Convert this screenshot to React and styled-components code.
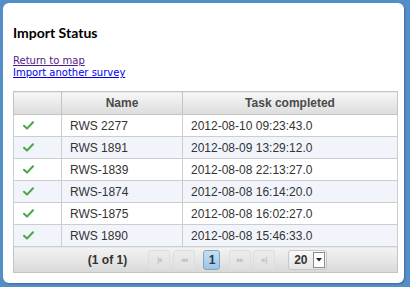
import styled, { createGlobalStyle } from 'styled-components'

const Global = createGlobalStyle`
  html, body {
    margin: 0;
    padding: 0;
    background: #548ec9;
  }
  body {
    width: 410px;
    height: 287px;
    overflow: hidden;
  }
`

const Panel = styled.div`
  box-sizing: border-box;
  margin: 3px 6px 0 3px;
  width: 401px;
  height: 280px;
  background: #fff;
  border-radius: 6px;
  box-shadow: 1px 1px 2px rgba(0, 0, 0, 0.25);
  padding: 21px 10px 0 10px;
`

const Title = styled.h2`
  margin: 0;
  font-family: Lato, "Liberation Sans", sans-serif;
  font-weight: bold;
  font-size: 14px;
  line-height: 17px;
  color: #000;
`

const Links = styled.div`
  margin-top: 14px;
  display: flex;
  flex-direction: column;
  font-family: "DejaVu Sans", sans-serif;
  font-size: 10px;
  line-height: 12px;
`

const NavLink = styled.a`
  color: ${p => (p.$visited ? '#551a8b' : '#0000ee')};
  text-decoration: underline;
`

const Table = styled.table`
  margin-top: 12px;
  width: 384px;
  border-collapse: collapse;
  font-family: "Liberation Sans", Arial, sans-serif;
  font-size: 12px;
  color: #333;
  table-layout: fixed;
`

const Th = styled.th`
  height: 22px;
  padding: 0;
  border: 1px solid #c4c4c4;
  background: linear-gradient(#f7f7f7, #dcdcdc);
  color: #4a4a4a;
  font-weight: bold;
  text-align: center;
`

const Row = styled.tr`
  background: ${p => (p.$alt ? '#f1f5fb' : '#fff')};
`

const Td = styled.td`
  height: 21px;
  padding: 0 0 0 8px;
  border: 1px solid #cdcdcd;
  white-space: nowrap;
  line-height: 14px;
`

const FooterCell = styled.td`
  height: 25px;
  padding: 0;
  border: 1px solid #c4c4c4;
  background: linear-gradient(#f3f3f3, #d9d9d9);
`

const Pager = styled.div`
  display: flex;
  align-items: center;
  justify-content: center;
  padding-left: 4px;
`

const Count = styled.span`
  font-weight: bold;
  color: #333;
  margin-right: 21px;
`

const PageBtn = styled.span`
  box-sizing: border-box;
  display: inline-flex;
  align-items: center;
  justify-content: center;
  width: ${p => p.$w || 22}px;
  height: 20px;
  margin-left: ${p => p.$gap || 0}px;
  border: 1px solid ${p => (p.$active ? '#7fa6c9' : '#dedede')};
  border-radius: 3px;
  background: ${p =>
    p.$active ? 'linear-gradient(#c9dff1, #9fc2e3)' : 'linear-gradient(#ececec, #e0e0e0)'};
  color: ${p => (p.$active ? '#1d3d5c' : '#c2c2c2')};
  font-weight: bold;
  font-size: ${p => (p.$active ? 12 : 7)}px;
  letter-spacing: -1px;
`

const Select = styled.span`
  box-sizing: border-box;
  display: inline-flex;
  align-items: center;
  justify-content: space-between;
  margin-left: 13px;
  width: 39px;
  height: 20px;
  border: 1px solid #c6c6c6;
  border-radius: 3px;
  background: linear-gradient(#f9f9f9, #e4e4e4);
  padding: 0 1px 0 5px;
  font-weight: bold;
  color: #333;
`

const Arrow = styled.span`
  box-sizing: border-box;
  display: inline-flex;
  align-items: center;
  justify-content: center;
  width: 12px;
  height: 16px;
  border: 1px solid #8c8c8c;
  background: #fff;
`

const Check = () => (
  <svg width="11" height="9" viewBox="0 0 11 9" style={{ display: 'block', marginLeft: 1 }}>
    <path d="M1 4.8 L4 7.6 L10 1.2" fill="none" stroke="#49a647" strokeWidth="2" strokeLinecap="round" strokeLinejoin="round" />
  </svg>
)

const rows = [
  ['RWS 2277', '2012-08-10 09:23:43.0'],
  ['RWS 1891', '2012-08-09 13:29:12.0'],
  ['RWS-1839', '2012-08-08 22:13:27.0'],
  ['RWS-1874', '2012-08-08 16:14:20.0'],
  ['RWS-1875', '2012-08-08 16:02:27.0'],
  ['RWS 1890', '2012-08-08 15:46:33.0'],
]

export default function App() {
  return (
    <>
      <Global />
      <Panel>
        <Title>Import Status</Title>
        <Links>
          <NavLink href="#" $visited>Return to map</NavLink>
          <NavLink href="#">Import another survey</NavLink>
        </Links>
        <Table>
          <colgroup>
            <col style={{ width: 48 }} />
            <col style={{ width: 121 }} />
            <col style={{ width: 215 }} />
          </colgroup>
          <thead>
            <tr>
              <Th></Th>
              <Th>Name</Th>
              <Th>Task completed</Th>
            </tr>
          </thead>
          <tbody>
            {rows.map(([name, date], i) => (
              <Row key={name} $alt={i % 2 === 1}>
                <Td><Check /></Td>
                <Td>{name}</Td>
                <Td>{date}</Td>
              </Row>
            ))}
          </tbody>
          <tfoot>
            <tr>
              <FooterCell colSpan={3}>
                <Pager>
                  <Count>(1 of 1)</Count>
                  <PageBtn>|◂</PageBtn>
                  <PageBtn $gap={3}>◂◂</PageBtn>
                  <PageBtn $active $w={17} $gap={8}>1</PageBtn>
                  <PageBtn $gap={9}>▸▸</PageBtn>
                  <PageBtn $gap={2}>▸|</PageBtn>
                  <Select>
                    20
                    <Arrow>
                      <svg width="6" height="4" viewBox="0 0 6 4"><path d="M0 0 H6 L3 3.5 Z" fill="#222" /></svg>
                    </Arrow>
                  </Select>
                </Pager>
              </FooterCell>
            </tr>
          </tfoot>
        </Table>
      </Panel>
    </>
  )
}
